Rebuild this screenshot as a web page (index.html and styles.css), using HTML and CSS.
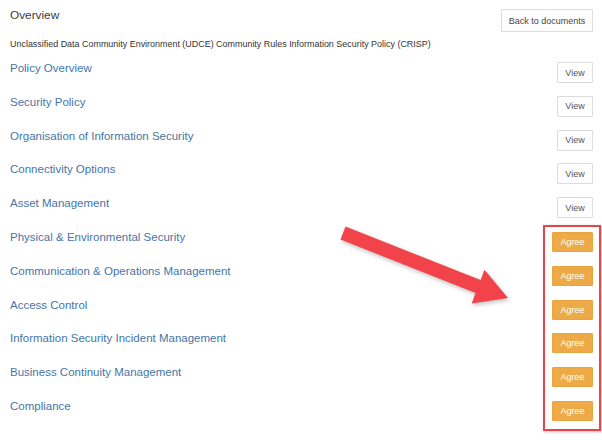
FILE: index.html
```html
<!DOCTYPE html>
<html>
<head>
<meta charset="utf-8">
<link rel="stylesheet" href="styles.css">
</head>
<body>
<div class="page">
  <div class="header">
    <div class="title">Overview</div>
    <button class="btn btn-default btn-back">Back to documents</button>
  </div>
  <div class="subtitle">Unclassified Data Community Environment (UDCE) Community Rules Information Security Policy (CRISP)</div>
  <ul class="docs">
    <li class="row"><a class="doc-link">Policy Overview</a><button class="btn btn-default btn-view">View</button></li>
    <li class="row"><a class="doc-link">Security Policy</a><button class="btn btn-default btn-view">View</button></li>
    <li class="row"><a class="doc-link">Organisation of Information Security</a><button class="btn btn-default btn-view">View</button></li>
    <li class="row"><a class="doc-link">Connectivity Options</a><button class="btn btn-default btn-view">View</button></li>
    <li class="row"><a class="doc-link">Asset Management</a><button class="btn btn-default btn-view">View</button></li>
    <li class="row"><a class="doc-link">Physical &amp; Environmental Security</a><button class="btn btn-agree">Agree</button></li>
    <li class="row"><a class="doc-link">Communication &amp; Operations Management</a><button class="btn btn-agree">Agree</button></li>
    <li class="row"><a class="doc-link">Access Control</a><button class="btn btn-agree">Agree</button></li>
    <li class="row"><a class="doc-link">Information Security Incident Management</a><button class="btn btn-agree">Agree</button></li>
    <li class="row"><a class="doc-link">Business Continuity Management</a><button class="btn btn-agree">Agree</button></li>
    <li class="row"><a class="doc-link">Compliance</a><button class="btn btn-agree">Agree</button></li>
  </ul>
</div>
<div class="highlight-box"></div>
<svg class="arrow" width="602" height="441" viewBox="0 0 602 441">
  <polygon points="340.5,239.5 345.5,226.5 480.6,280.1 484.5,269.8 508,298 471.7,303.4 475.6,293.1" fill="#f2434a"/>
</svg>
</body>
</html>
```
FILE: styles.css
```css
html, body {
  margin: 0;
  padding: 0;
  background: #ffffff;
}
body {
  font-family: "Liberation Sans", Arial, sans-serif;
  color: #333333;
  width: 602px;
  height: 441px;
  overflow: hidden;
  position: relative;
}
.page {
  padding: 8px 9px 0 10px;
}
.header {
  display: flex;
  justify-content: space-between;
  align-items: flex-start;
}
.title {
  font-size: 11.8px;
  line-height: 14px;
  color: #3a3a3a;
}
.btn {
  font-family: "Liberation Sans", Arial, sans-serif;
  font-size: 9px;
  padding: 0;
  margin: 0;
  border-radius: 1px;
  cursor: pointer;
}
.btn-default {
  background: #fff;
  border: 1px solid #dcdcdc;
  color: #444;
}
.btn-back {
  margin-top: 1px;
  width: 92px;
  height: 23px;
}
.subtitle {
  margin-top: 6px;
  font-size: 8.95px;
  line-height: 12px;
  color: #333;
}
.docs {
  list-style: none;
  margin: 1px 0 0 0;
  padding: 0;
}
.row {
  display: flex;
  justify-content: space-between;
  align-items: flex-start;
  height: 33.8px;
}
.doc-link {
  font-size: 11.5px;
  line-height: 14px;
  padding-top: 10px;
  color: #4675a7;
  text-decoration: none;
}
.btn-view {
  margin-top: 11px;
  width: 36px;
  height: 21px;
  color: #555;
}
.btn-agree {
  margin-top: 12px;
  width: 41px;
  height: 20px;
  background: #eeaa46;
  border: 1px solid #eaa43f;
  color: #fff;
}
.highlight-box {
  position: absolute;
  left: 543px;
  top: 225px;
  width: 54px;
  height: 202px;
  border: 2px solid #e4464c;
  box-shadow: 1px 1px 3px rgba(0,0,0,0.25);
}
.arrow {
  position: absolute;
  left: 0;
  top: 0;
  filter: drop-shadow(1px 2px 2px rgba(0,0,0,0.25));
}
```
